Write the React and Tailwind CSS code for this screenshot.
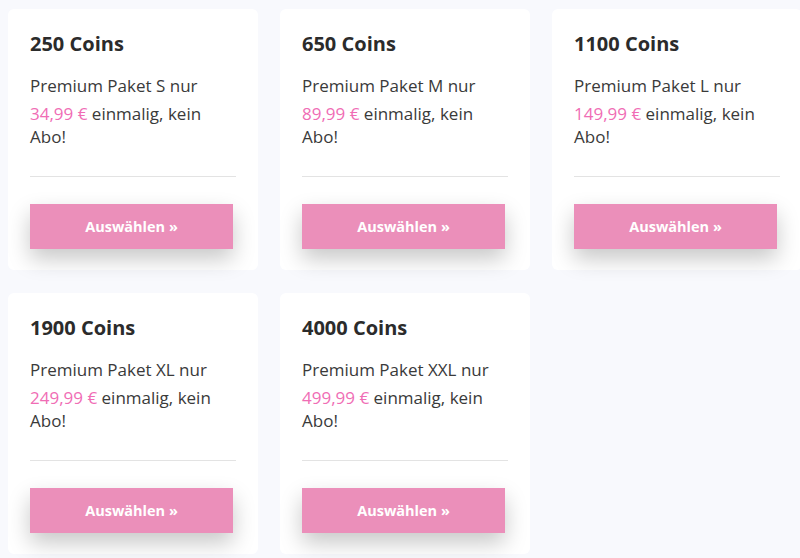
import React from "react";

const packs = [
  { coins: "250 Coins", size: "S", price: "34,99 €" },
  { coins: "650 Coins", size: "M", price: "89,99 €" },
  { coins: "1100 Coins", size: "L", price: "149,99 €" },
  { coins: "1900 Coins", size: "XL", price: "249,99 €" },
  { coins: "4000 Coins", size: "XXL", price: "499,99 €" },
];

function Card({ coins, size, price }) {
  return (
    <div className="w-[250px] h-[261px] bg-white rounded-md px-[22px] pt-[21px] flex flex-col">
      <h3
        className="text-[20px] leading-[28px] font-bold text-[#2b2b2b]"
        style={{ fontFamily: "'Open Sans', Roboto, sans-serif" }}
      >
        {coins}
      </h3>
      <div className="mt-[16px] text-[17px] text-[#3a3a3a]" style={{ fontFamily: "'Open Sans', 'Noto Sans', sans-serif" }}>
        <p className="leading-[23px]">Premium Paket {size} nur</p>
        <p className="leading-[23px] mt-[5px]">
          <span className="text-[#f06db5]">{price}</span> einmalig, kein Abo!
        </p>
      </div>
      <div className="mt-auto border-t border-[#e3e3e3] w-full" />
      <button
        className="mt-[27px] mb-[21px] w-[203px] h-[45px] bg-[#eb8fba] text-white font-bold text-[14.5px] shadow-[0_10px_22px_rgba(0,0,0,0.22)]"
        style={{ fontFamily: "'Open Sans', 'Noto Sans', sans-serif" }}
      >
        Auswählen »
      </button>
    </div>
  );
}

export default function App() {
  return (
    <div className="w-[800px] h-[558px] overflow-hidden bg-[#f8f9fd]">
      <div className="grid grid-cols-[250px_250px_250px] gap-x-[22px] gap-y-[23px] pl-[8px] pt-[9px] w-[810px]">
        {packs.map((p) => (
          <Card key={p.coins} {...p} />
        ))}
      </div>
    </div>
  );
}
